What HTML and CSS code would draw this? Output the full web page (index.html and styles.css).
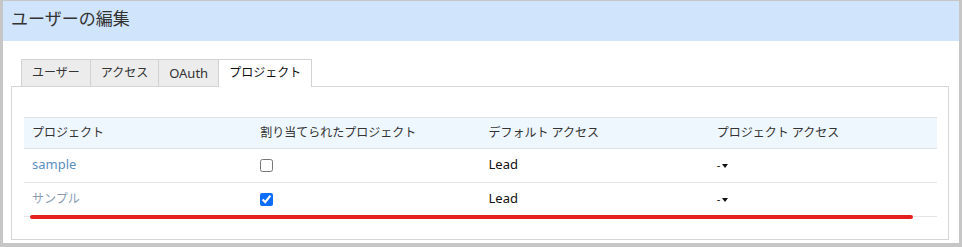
FILE: index.html
```html
<!DOCTYPE html>
<html lang="ja">
<head>
  <meta charset="UTF-8">
  <title>ユーザーの編集</title>
  <link rel="stylesheet" href="styles.css">
</head>
<body>

  <div class="window">
    <!-- Titre -->
    <div class="window-header">ユーザーの編集</div>

    <div class="window-body">
      <!-- Onglets -->
      <div class="tabs">
        <div class="tab">ユーザー</div>
        <div class="tab">アクセス</div>
        <div class="tab latin">OAuth</div>
        <div class="tab active">プロジェクト</div>
      </div>

      <div class="tab-panel">
        <table class="project-table">
          <thead>
            <tr>
              <th>プロジェクト</th>
              <th>割り当てられたプロジェクト</th>
              <th>デフォルト アクセス</th>
              <th>プロジェクト アクセス</th>
            </tr>
          </thead>
          <tbody>
            <tr>
              <td><a class="project-link latin" href="#">sample</a></td>
              <td><input type="checkbox" class="assign"></td>
              <td class="access latin">Lead</td>
              <td><span class="select">-<span class="caret"></span></span></td>
            </tr>
            <tr>
              <td><a class="project-link muted" href="#">サンプル</a></td>
              <td><input type="checkbox" class="assign" checked></td>
              <td class="access latin">Lead</td>
              <td><span class="select">-<span class="caret"></span></span></td>
            </tr>
          </tbody>
        </table>
        <div class="highlight"></div>
      </div>
    </div>
  </div>

</body>
</html>
```

FILE: styles.css
```css
body {
  margin: 0;
  padding: 1px 3px 4px 3px;
  background: #c6c6c6;
  font-family: "Noto Sans", "Noto Sans CJK JP", sans-serif;
  color: #333;
  height: 247px;
  box-sizing: border-box;
  overflow: hidden;
}

.window {
  background: white;
  height: 242px;
}

.window-header {
  height: 40px;
  line-height: 36px;
  padding-left: 8px;
  background: #d0e4fb;
  font-size: 17px;
  color: #333;
}

.window-body {
  padding: 18px 10px 4px 8px;
}

.tabs {
  display: flex;
  margin-left: 10px;
}

.tab {
  height: 26px;
  line-height: 26px;
  padding: 0 10px;
  font-size: 12px;
  color: #333;
  background: #ececec;
  border: 1px solid #d2d2d2;
  border-bottom: none;
  margin-right: -1px;
}

.tab.latin {
  font-size: 13px;
}

.tab.active {
  background: white;
  color: #111;
  position: relative;
  height: 27px;
  margin-bottom: -1px;
  z-index: 1;
}

.tab-panel {
  position: relative;
  border: 1px solid #d6d6d6;
  padding: 30px 11px 22px 12px;
}

.project-table {
  width: 100%;
  border-collapse: collapse;
  table-layout: fixed;
  font-size: 12px;
}

.project-table th {
  text-align: left;
  font-weight: normal;
  color: #333;
  background: #eef6fe;
  height: 28px;
  padding: 0 8px 2px;
  border-top: 1px solid #dde2e7;
  border-bottom: 1px solid #dde2e7;
}

.project-table td {
  height: 30px;
  padding: 0 8px 3px;
  border-bottom: 1px solid #e6e6e6;
}

.project-table tbody tr:first-child td {
  height: 30px;
}

.latin {
  font-size: 13px;
}

.project-link {
  color: #5b8fbf;
  text-decoration: none;
}

.project-link.muted {
  color: #8b9cb2;
}

.assign {
  margin: 0;
  width: 13px;
  height: 13px;
  vertical-align: middle;
  accent-color: #0d6efd;
}

.access {
  color: #111;
}

.select {
  font-size: 11px;
  color: #111;
}

.caret {
  display: inline-block;
  margin-left: 2px;
  vertical-align: middle;
  border-left: 3px solid transparent;
  border-right: 3px solid transparent;
  border-top: 4px solid #111;
}

/* trait rouge d'annotation */
.highlight {
  position: absolute;
  left: 18px;
  top: 128px;
  width: 883px;
  height: 4px;
  border-radius: 2px;
  background: #e4201f;
}
```
